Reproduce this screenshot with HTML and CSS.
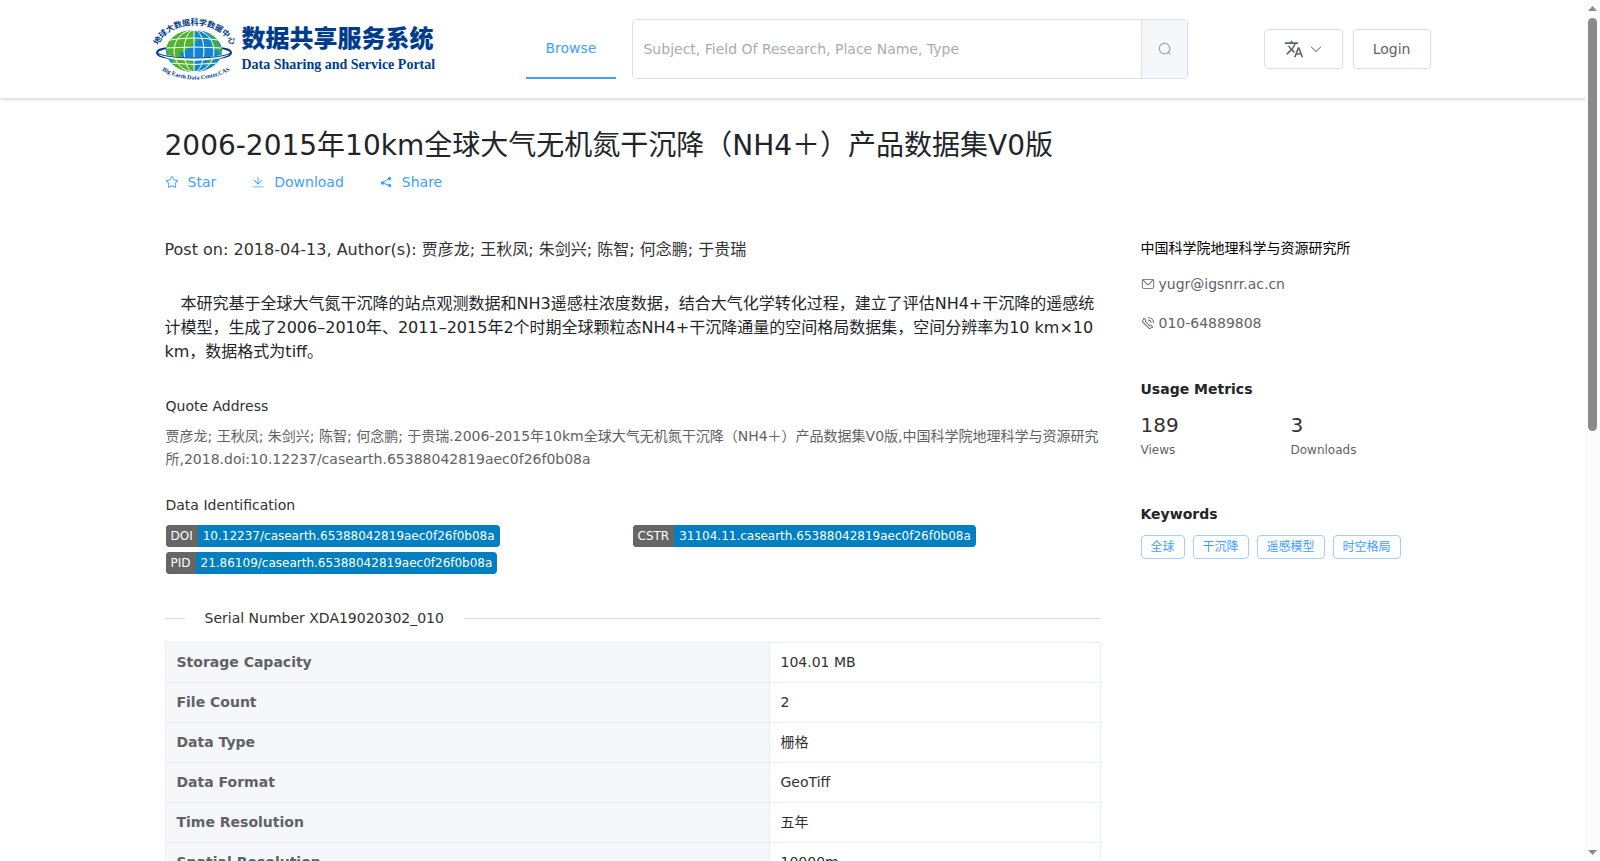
FILE: index.html
```html
<!DOCTYPE html>
<html lang="zh-CN">
<head>
    <meta charset="UTF-8">
    <meta name="viewport" content="width=device-width, initial-scale=1.0">
    <title>数据共享服务系统</title>
    <link rel="stylesheet" href="styles.css">
</head>
<body>
    <header class="header">
        <div class="header-inner">
            <a class="logo" href="#">
                <svg class="logo-globe" viewBox="0 0 80 62" aria-hidden="true">
                    <defs>
                        <path id="arcTop" d="M3 28 C14 0 65 0 76 28"/>
                        <path id="arcBottom" d="M6 52 Q40 71 76 52"/>
                        <clipPath id="globeClip"><ellipse cx="39" cy="33" rx="28" ry="21"/></clipPath>
                    </defs>
                    <path d="M14 30 C-2 31 -2 38 14 40 C28 43 50 43 64 40 C80 38 80 31 64 30" fill="none" stroke="#003c8c" stroke-width="2"/>
                    <ellipse cx="39" cy="33" rx="28" ry="21" fill="#1187d4"/>
                    <g clip-path="url(#globeClip)">
                        <path d="M11 32 C13 18 25 12 40 12 L38 20 L43 22 L36 28 L31 32 L24 35 L29 41 L38 44 L41 48 L35 55 L21 50 Z" fill="#4fb52b"/>
                        <path d="M52 15 L61 20 L67 32 L65 37 L61 31 L56 29 L58 23 Z M52 43 L58 41 L57 46 L50 49 Z" fill="#3fae49"/>
                        <g fill="none" stroke="#fff" stroke-width="1">
                            <path d="M39 12 V54 M15 22 Q39 18 63 22 M11 30 Q39 28 67 30 M14 45 Q39 48 64 45"/>
                            <ellipse cx="39" cy="33" rx="10" ry="21"/>
                            <ellipse cx="39" cy="33" rx="20" ry="21"/>
                        </g>
                    </g>
                    <path d="M5 36 C20 43 58 43 73 36" fill="none" stroke="#fff" stroke-width="3"/>
                    <path d="M1 34 C8 42 70 42 77 34" fill="none" stroke="#003c8c" stroke-width="1"/>
                    <text class="arc-cn"><textPath href="#arcTop" startOffset="50%">地球大数据科学数据中心</textPath></text>
                    <text class="arc-en"><textPath href="#arcBottom" startOffset="50%">Big Earth Data Center,CAS</textPath></text>
                </svg>
                <span class="logo-text">
                    <span class="logo-cn">数据共享服务系统</span>
                    <span class="logo-en">Data Sharing and Service Portal</span>
                </span>
            </a>
            <nav class="nav">
                <a class="nav-item" href="#">Browse</a>
            </nav>
            <form class="search">
                <input type="text" aria-label="Search" placeholder="Subject, Field Of Research, Place Name, Type">
                <button type="button" aria-label="Search">
                    <svg class="icon" viewBox="0 0 1024 1024"><path d="m795.904 750.72 124.992 124.928a32 32 0 0 1-45.248 45.248L750.656 795.904a416 416 0 1 1 45.248-45.248zM480 832a352 352 0 1 0 0-704 352 352 0 0 0 0 704z"/></svg>
                </button>
            </form>
            <div class="header-buttons">
                <button class="btn" type="button" aria-label="Language">
                    <svg class="icon-translate" viewBox="0 0 24 24"><path d="M12.87 15.07l-2.54-2.51.03-.03c1.74-1.94 2.98-4.17 3.71-6.53H17V4h-7V2H8v2H1v1.99h11.17C11.5 7.92 10.44 9.75 9 11.35 8.07 10.32 7.3 9.19 6.69 8h-2c.73 1.63 1.73 3.17 2.98 4.56l-5.09 5.02L4 19l5-5 3.11 3.11.76-2.04zM18.5 10h-2L12 22h2l1.12-3h4.75L21 22h2l-4.5-12zm-2.62 7l1.62-4.33L19.12 17h-3.24z"/></svg>
                    <svg class="icon" viewBox="0 0 1024 1024"><path d="M831.872 340.864 512 652.672 192.128 340.864a30.592 30.592 0 0 0-42.752 0 29.12 29.12 0 0 0 0 41.6L489.664 714.24a32 32 0 0 0 44.672 0l340.288-331.712a29.12 29.12 0 0 0 0-41.728 30.592 30.592 0 0 0-42.752 0z"/></svg>
                </button>
                <button class="btn" type="button">Login</button>
            </div>
        </div>
    </header>

    <main class="page">
        <h1>2006-2015年10km全球大气无机氮干沉降（NH4＋）产品数据集V0版</h1>
        <div class="actions">
            <a href="#">
                <svg class="icon" viewBox="0 0 1024 1024"><path d="m512 747.84 228.16 119.936a6.4 6.4 0 0 0 9.28-6.72l-43.52-254.08 184.512-179.904a6.4 6.4 0 0 0-3.52-10.88l-255.104-37.12L517.76 147.904a6.4 6.4 0 0 0-11.52 0L392.192 379.072l-255.104 37.12a6.4 6.4 0 0 0-3.52 10.88L318.08 606.976l-43.584 254.08a6.4 6.4 0 0 0 9.28 6.72L512 747.84zM313.6 924.48a70.4 70.4 0 0 1-102.144-74.24l37.888-220.928L88.96 472.96A70.4 70.4 0 0 1 128 352.896l221.76-32.256 99.2-200.96a70.4 70.4 0 0 1 126.208 0l99.2 200.96 221.824 32.256a70.4 70.4 0 0 1 39.04 120.064L774.72 629.376l37.888 220.928a70.4 70.4 0 0 1-102.144 74.24L512 820.096l-198.4 104.32z"/></svg>
                Star
            </a>
            <a href="#">
                <svg class="icon" viewBox="0 0 1024 1024"><path d="M160 832h704a32 32 0 1 1 0 64H160a32 32 0 1 1 0-64zm384-253.696 236.288-236.352 45.248 45.248L508.8 704 192 387.2l45.248-45.248L480 584.704V128h64v450.304z"/></svg>
                Download
            </a>
            <a href="#">
                <svg class="icon" viewBox="0 0 1024 1024"><path d="m679.872 348.8-301.76 188.608a127.808 127.808 0 0 1 5.12 52.16l279.936 104.96a128 128 0 1 1-22.464 59.904l-279.872-104.96a128 128 0 1 1-16.64-166.272l301.696-188.608a128 128 0 1 1 33.92 54.272z"/></svg>
                Share
            </a>
        </div>

        <div class="columns">
            <div class="content">
                <p class="post">Post on: 2018-04-13, Author(s): 贾彦龙; 王秋凤; 朱剑兴; 陈智; 何念鹏; 于贵瑞</p>
                <p class="desc">　本研究基于全球大气氮干沉降的站点观测数据和NH3遥感柱浓度数据，结合大气化学转化过程，建立了评估NH4+干沉降的遥感统计模型，生成了2006–2010年、2011–2015年2个时期全球颗粒态NH4+干沉降通量的空间格局数据集，空间分辨率为10 km×10 km，数据格式为tiff。</p>

                <section class="block">
                    <h2>Quote Address</h2>
                    <p class="quote">贾彦龙; 王秋凤; 朱剑兴; 陈智; 何念鹏; 于贵瑞.2006-2015年10km全球大气无机氮干沉降（NH4＋）产品数据集V0版,中国科学院地理科学与资源研究所,2018.doi:10.12237/casearth.65388042819aec0f26f0b08a</p>
                </section>

                <section class="block">
                    <h2>Data Identification</h2>
                    <div class="badges">
                        <div class="badge"><span>DOI</span><span>10.12237/casearth.65388042819aec0f26f0b08a</span></div>
                        <div class="badge"><span>CSTR</span><span>31104.11.casearth.65388042819aec0f26f0b08a</span></div>
                        <div class="badge"><span>PID</span><span>21.86109/casearth.65388042819aec0f26f0b08a</span></div>
                    </div>
                </section>

                <div class="divider">Serial Number XDA19020302_010</div>
                <table class="info-table">
                    <tr><th scope="row">Storage Capacity</th><td>104.01 MB</td></tr>
                    <tr><th scope="row">File Count</th><td>2</td></tr>
                    <tr><th scope="row">Data Type</th><td>栅格</td></tr>
                    <tr><th scope="row">Data Format</th><td>GeoTiff</td></tr>
                    <tr><th scope="row">Time Resolution</th><td>五年</td></tr>
                    <tr><th scope="row">Spatial Resolution</th><td>10000m</td></tr>
                </table>
            </div>

            <aside class="sidebar">
                <div class="org">中国科学院地理科学与资源研究所</div>
                <div class="contact">
                    <svg class="icon" viewBox="0 0 1024 1024"><path d="M128 224v512a64 64 0 0 0 64 64h640a64 64 0 0 0 64-64V224H128zm0-64h768a64 64 0 0 1 64 64v512a128 128 0 0 1-128 128H192A128 128 0 0 1 64 736V224a64 64 0 0 1 64-64z"/><path d="M904 224 656.512 506.88a192 192 0 0 1-289.024 0L120 224h784zm-698.944 0 210.56 240.704a128 128 0 0 0 192.704 0L818.944 224H205.056z"/></svg>
                    yugr@igsnrr.ac.cn
                </div>
                <div class="contact">
                    <svg class="icon" viewBox="0 0 1024 1024"><path d="M79.36 432.256 591.744 944.64a32 32 0 0 0 35.2 6.784l253.44-108.544a32 32 0 0 0 9.984-52.032l-153.856-153.92a32 32 0 0 0-36.928-6.016l-69.888 34.944L358.08 394.24l35.008-69.888a32 32 0 0 0-5.952-36.928L233.152 133.568a32 32 0 0 0-52.032 10.048L72.512 397.056a32 32 0 0 0 6.784 35.2zm60.48-29.952 81.536-190.08L325.568 316.48l-24.64 49.216-20.608 41.216 32.576 32.64 271.552 271.552 32.64 32.64 41.216-20.672 49.28-24.576 104.192 104.128-190.08 81.472L139.84 402.304zM512 320v-64a256 256 0 0 1 256 256h-64a192 192 0 0 0-192-192zm0-192V64a448 448 0 0 1 448 448h-64a384 384 0 0 0-384-384z"/></svg>
                    010-64889808
                </div>

                <h3>Usage Metrics</h3>
                <div class="metrics">
                    <div><strong>189</strong><span>Views</span></div>
                    <div><strong>3</strong><span>Downloads</span></div>
                </div>

                <h3>Keywords</h3>
                <div class="tags">
                    <span class="tag">全球</span>
                    <span class="tag">干沉降</span>
                    <span class="tag">遥感模型</span>
                    <span class="tag">时空格局</span>
                </div>
            </aside>
        </div>
    </main>

    <div class="scrollbar" aria-hidden="true">
        <svg viewBox="0 0 9 5"><path d="M0 5 L4.5 0 L9 5 Z"/></svg>
        <div class="scroll-track"><div class="scroll-thumb"></div></div>
        <svg viewBox="0 0 9 5"><path d="M0 0 H9 L4.5 5 Z"/></svg>
    </div>
</body>
</html>
```
FILE: styles.css
```css
* {
    box-sizing: border-box;
}
html {
    height: 100%;
    overflow: hidden;
}
body {
    height: 100%;
    margin: 0;
    padding-right: 15px;
    overflow: hidden;
    font-family: "DejaVu Sans", "Noto Sans CJK SC", sans-serif;
    font-size: 14px;
    color: #303133;
    background-color: #fff;
}
h1, h2, h3, p {
    margin: 0;
    font-weight: 400;
}
a {
    color: #409eff;
    text-decoration: none;
}
button, input {
    font-family: inherit;
    font-size: 14px;
}
.icon {
    width: 14px;
    height: 14px;
    fill: currentColor;
    flex-shrink: 0;
}

/* header */
.header {
    margin-right: -15px;
    padding-right: 15px;
    height: 98px;
    box-shadow: 0 1px 4px rgba(0, 0, 0, 0.2);
}
.header-inner {
    display: flex;
    align-items: center;
    max-width: 1276px;
    height: 98px;
    margin: 0 auto;
}
.logo {
    display: flex;
    align-items: center;
    gap: 7px;
    width: 284px;
    color: #003c8c;
}
.logo-globe {
    width: 80px;
    height: 62px;
    overflow: visible;
    fill: #003c8c;
}
.arc-cn {
    font-family: "Noto Sans CJK SC", sans-serif;
    font-size: 8px;
    font-weight: 700;
    text-anchor: middle;
}
.arc-en {
    font-family: "Liberation Serif", serif;
    font-size: 6px;
    font-weight: 700;
    text-anchor: middle;
}
.logo-text {
    display: flex;
    flex-direction: column;
    gap: 2px;
    padding-top: 2px;
    white-space: nowrap;
}
.logo-cn {
    font-family: "Noto Sans CJK SC", sans-serif;
    font-size: 24px;
    font-weight: 900;
    line-height: 28px;
}
.logo-en {
    font-family: "Liberation Serif", serif;
    font-size: 14px;
    font-weight: 700;
    line-height: 24px;
}
.nav {
    margin-left: 87px;
}
.nav-item {
    display: block;
    height: 60px;
    padding: 0 20px;
    line-height: 58px;
    border-bottom: 2px solid #409eff;
}
.search {
    display: flex;
    flex: 1;
    max-width: 556px;
    height: 60px;
    margin-left: 16px;
    border: 1px solid #dcdfe6;
    border-radius: 4px;
    overflow: hidden;
}
.search input {
    flex: 1;
    min-width: 0;
    padding: 0 10px;
    border: none;
    outline: none;
    color: #606266;
}
.search input::placeholder {
    color: #a8abb2;
}
.search button {
    width: 46px;
    padding: 0;
    border: none;
    border-left: 1px solid #dcdfe6;
    background-color: #f5f7fa;
    color: #909399;
    cursor: pointer;
}
.search .icon {
    display: block;
    margin: 0 auto;
}
.header-buttons {
    display: flex;
    gap: 10px;
    margin-left: auto;
}
.btn {
    display: flex;
    align-items: center;
    gap: 5px;
    height: 40px;
    padding: 0 19px;
    border: 1px solid #dcdfe6;
    border-radius: 4px;
    background-color: #fff;
    color: #606266;
    cursor: pointer;
}
.icon-translate {
    width: 20px;
    height: 20px;
    fill: currentColor;
}

/* page */
.page {
    max-width: 1256px;
    margin: 0 auto;
    padding-top: 30px;
}
h1 {
    font-size: 28px;
    line-height: 36px;
    color: #212529;
}
.actions {
    display: flex;
    gap: 35px;
    margin-top: 8px;
    line-height: 20px;
}
.actions a {
    display: flex;
    align-items: center;
    gap: 9px;
}
.columns {
    display: grid;
    grid-template-columns: 1fr 280px;
    gap: 40px;
    margin-top: 45px;
}
.post {
    font-size: 16px;
    line-height: 26px;
}
.desc {
    margin-top: 29px;
    font-size: 16px;
    line-height: 24px;
    color: #212529;
}
.block {
    margin-top: 31px;
    padding: 0 1px;
}
.block + .block {
    margin-top: 23px;
}
.block h2 {
    font-size: 14px;
    line-height: 22px;
}
.quote {
    margin-top: 8px;
    line-height: 23px;
    color: #606266;
}
.badges {
    display: grid;
    grid-template-columns: 1fr 1fr;
    gap: 5px 0;
    margin-top: 9px;
}
.badge {
    display: flex;
    justify-self: start;
    border-radius: 4px;
    overflow: hidden;
    font-size: 12px;
    line-height: 22px;
    color: #fff;
    background-color: #0080c0;
}
.badge span {
    padding: 0 5px;
}
.badge span:first-child {
    background-color: #666;
}
.divider {
    display: flex;
    align-items: center;
    gap: 20px;
    margin-top: 33px;
    line-height: 22px;
}
.divider::before, .divider::after {
    content: "";
    width: 20px;
    height: 1px;
    background-color: #dcdfe6;
}
.divider::after {
    flex: 1;
}
.info-table {
    width: 100%;
    margin-top: 13px;
    border-collapse: collapse;
    line-height: 23px;
}
.info-table th, .info-table td {
    height: 40px;
    padding: 8px 11px;
    border: 1px solid #ebeef5;
    text-align: left;
}
.info-table th {
    width: 604px;
    background-color: #f5f7fa;
    color: #606266;
}

/* sidebar */
.org {
    line-height: 22px;
    color: #000;
}
.contact {
    display: flex;
    align-items: center;
    gap: 4px;
    height: 39px;
    color: #606266;
}
.org + .contact {
    margin-top: 5px;
}
.sidebar h3 {
    margin-top: 36px;
    font-size: 14px;
    font-weight: 700;
    line-height: 22px;
    color: #212529;
}
.metrics {
    display: grid;
    grid-template-columns: 150px 1fr;
    margin-top: 10px;
    margin-bottom: 43px;
}
.metrics strong, .metrics span {
    display: block;
    font-weight: 400;
}
.metrics strong {
    font-size: 20px;
    line-height: 30px;
}
.metrics span {
    font-size: 12px;
    line-height: 20px;
    color: #606266;
}
.tags {
    display: flex;
    flex-wrap: wrap;
    gap: 8px;
    margin-top: 10px;
}
.tag {
    height: 24px;
    padding: 0 9px;
    border: 1px solid #a0cfff;
    border-radius: 4px;
    font-size: 12px;
    line-height: 22px;
    color: #409eff;
}

/* scrollbar */
.scrollbar {
    position: fixed;
    top: 0;
    right: 0;
    bottom: 0;
    display: flex;
    flex-direction: column;
    align-items: center;
    width: 15px;
    padding: 6px 0;
    background-color: #fcfcfc;
}
.scrollbar svg {
    width: 9px;
    height: 5px;
    fill: #8b8b8b;
}
.scroll-track {
    flex: 1;
    width: 9px;
    padding: 7px 0;
}
.scroll-thumb {
    height: 50%;
    border-radius: 5px;
    background-color: #8b8b8b;
}
```
